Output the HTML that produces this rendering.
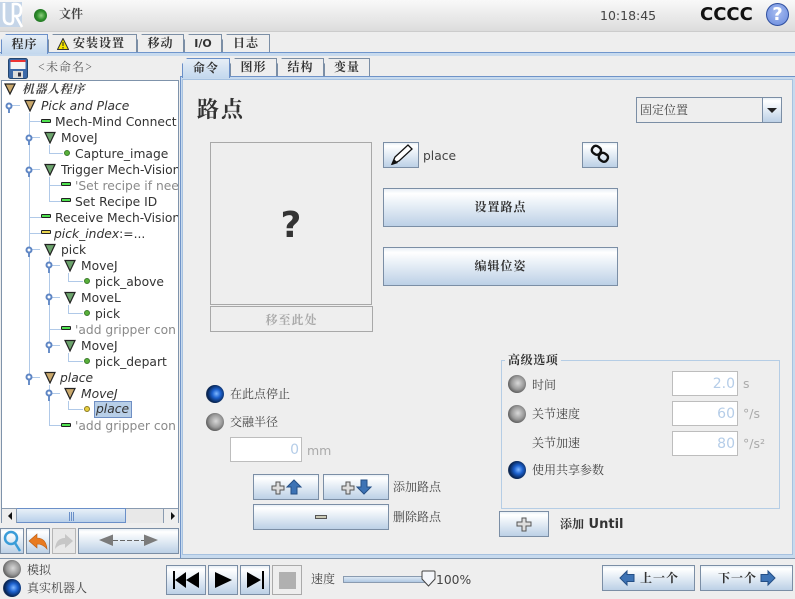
<!DOCTYPE html>
<html lang="zh"><head><meta charset="utf-8"><title>Waypoint</title>
<style>
html,body{margin:0;padding:0}
body{width:795px;height:599px;overflow:hidden;background:#eee;position:relative;font-family:"DejaVu Sans","Noto Serif CJK SC",sans-serif;color:#333}
div,span,svg{position:absolute;box-sizing:border-box}
.c{font-family:"Noto Serif CJK SC","WenQuanYi Zen Hei",serif;white-space:nowrap;color:#444;font-size:12px}
.t{font-size:12.3px;white-space:nowrap;line-height:16px;color:#333;margin-top:1px}
.i{font-style:italic}.g{color:#8a8a8a}
.btn{border:1px solid #7b8ea5;background:linear-gradient(#e8eff6 0,#fff 12%,#e6eef6 45%,#bcd0e6 100%);text-align:center}
.tab{border:1px solid #7b8ea5;border-bottom:0;background:#eee;font-weight:bold;font-size:12px;letter-spacing:1px;text-align:center;font-family:"Noto Serif CJK SC",serif;color:#333;clip-path:polygon(5px 0,100% 0,100% 100%,0 100%,0 6px)}
.tab.on{background:linear-gradient(#e6eef6,#c3d8ee);border-color:#6a8fc8;top:auto}
.l{background:#b0c9e8}
.bar{width:10px;height:4px;border:1px solid #222;background:#4fe04f;border-radius:1px}
.yb{background:#e8d44f}
.dot{width:6px;height:6px;border-radius:50%;background:#58b03a;border:1px solid #3a7a2a}
.fld{background:#fff;border:1px solid #bdbdbd;text-align:right;font-size:14px;line-height:24px;padding-right:2px;color:#b5cde8;height:25px}
.rg{width:18px;height:18px;border-radius:50%;background:radial-gradient(circle at 55% 45%,#d8d8d8 0,#9a9a9a 45%,#555 75%,#bbb 100%)}
.rb{width:18px;height:18px;border-radius:50%;background:radial-gradient(circle at 58% 48%,#7fb7ff 0,#1d62cf 30%,#06224f 65%,#999 100%)}
.u{font-size:12.5px;color:#aaa;white-space:nowrap;margin-top:2px}
</style></head><body>

<!-- top bar -->
<div style="left:0;top:0;width:795px;height:32px;background:linear-gradient(#f9f9f9,#dcdcdc);border-bottom:1px solid #ccc"></div>
<div style="left:0;top:2px;width:22px;height:25px;background:#c5d5e8"></div>
<svg style="left:0;top:2px" width="24" height="26" viewBox="0 0 24 26"><path d="M4 1V16Q4 22 10 22Q13 22 13 18V1M13 14H17Q21 14 21 8Q21 2 16 2H13M16 14L22 25" fill="none" stroke="#fff" stroke-width="2.6"/></svg>
<div style="left:34px;top:9px;width:13px;height:13px;border-radius:50%;background:radial-gradient(circle at 55% 50%,#8fd080 0,#2f8f2c 45%,#0f5518 100%)"></div>
<div class="c" style="left:59px;top:6px;font-weight:bold;line-height:16px">文件</div>
<div class="t" style="left:600px;top:7px;color:#444;font-size:12.5px">10:18:45</div>
<div style="left:700px;top:4px;font-size:18px;font-weight:bold;color:#111;line-height:22px;white-space:nowrap">CCCC</div>
<div style="left:766px;top:3px;width:23px;height:23px;border-radius:50%;background:radial-gradient(circle at 50% 40%,#a8bdf0,#6688dd);border:1px solid #2f4f9f;color:#fff;font-weight:bold;font-size:18px;line-height:21px;text-align:center">?</div>

<!-- main tabs -->
<div style="left:0;top:52px;width:795px;height:1px;background:#7096cc"></div>
<div style="left:0;top:53px;width:795px;height:3px;background:#c7daee"></div>
<div class="tab on" style="left:1px;top:34px;width:47px;height:20px;line-height:17px">程序</div>
<div class="tab" style="left:48px;top:34px;width:89px;height:18px;line-height:16px;text-align:right;padding-right:11px">安装设置</div>
<svg style="left:57px;top:38px" width="12" height="12"><path d="M6 .5L11.5 11.5H.5Z" fill="#f6e600" stroke="#333"/><path d="M6 4V8M6 9V10.5" stroke="#222"/></svg>
<div class="tab" style="left:137px;top:34px;width:47px;height:18px;line-height:16px">移动</div>
<div class="tab" style="left:184px;top:34px;width:38px;height:18px;line-height:17px;font-family:'DejaVu Sans';font-size:11px;letter-spacing:0">I/O</div>
<div class="tab" style="left:222px;top:34px;width:48px;height:18px;line-height:16px">日志</div>

<!-- save row -->
<svg style="left:8px;top:58px" width="20" height="21" viewBox="0 0 20 21"><rect x=".5" y=".5" width="19" height="20" rx="2" fill="#3c69a8" stroke="#24466f"/><rect x="2.5" y="2" width="15" height="9" fill="#f4f4f4"/><rect x="2.5" y="2" width="15" height="2" fill="#e33"/><rect x="5" y="13" width="10" height="7" fill="#ddd"/><rect x="10" y="14.500" width="3" height="4" fill="#334"/></svg>
<div class="c" style="left:38px;top:59px;line-height:16px;color:#555;letter-spacing:1px">&lt;未命名&gt;</div>

<!-- tree -->
<div style="left:1px;top:80px;width:178px;height:443px;background:#fff;border:1px solid #7f93ab"></div>
<div style="left:0;top:80px;width:178px;height:428px;overflow:hidden" id="tree">
<!-- connectors -->
<div class="l" style="left:9px;top:25px;width:11px;height:1px"></div>
<div class="l" style="left:29px;top:33px;width:1px;height:264px"></div>
<div class="l" style="left:29px;top:41px;width:12px;height:1px"></div>
<div class="l" style="left:29px;top:137px;width:12px;height:1px"></div>
<div class="l" style="left:29px;top:153px;width:12px;height:1px"></div>
<div class="l" style="left:29px;top:57px;width:11px;height:1px"></div>
<div class="l" style="left:29px;top:89px;width:11px;height:1px"></div>
<div class="l" style="left:29px;top:169px;width:11px;height:1px"></div>
<div class="l" style="left:29px;top:297px;width:11px;height:1px"></div>
<div class="l" style="left:49px;top:65px;width:1px;height:8px"></div>
<div class="l" style="left:49px;top:73px;width:14px;height:1px"></div>
<div class="l" style="left:49px;top:97px;width:1px;height:25px"></div>
<div class="l" style="left:49px;top:105px;width:12px;height:1px"></div>
<div class="l" style="left:49px;top:121px;width:12px;height:1px"></div>
<div class="l" style="left:49px;top:177px;width:1px;height:88px"></div>
<div class="l" style="left:49px;top:185px;width:11px;height:1px"></div>
<div class="l" style="left:49px;top:217px;width:11px;height:1px"></div>
<div class="l" style="left:49px;top:249px;width:12px;height:1px"></div>
<div class="l" style="left:49px;top:265px;width:11px;height:1px"></div>
<div class="l" style="left:49px;top:305px;width:1px;height:41px"></div>
<div class="l" style="left:49px;top:313px;width:11px;height:1px"></div>
<div class="l" style="left:49px;top:345px;width:12px;height:1px"></div>
<div class="l" style="left:68px;top:193px;width:1px;height:9px"></div><div class="l" style="left:68px;top:201px;width:15px;height:1px"></div>
<div class="l" style="left:68px;top:225px;width:1px;height:9px"></div><div class="l" style="left:68px;top:233px;width:15px;height:1px"></div>
<div class="l" style="left:68px;top:273px;width:1px;height:9px"></div><div class="l" style="left:68px;top:281px;width:15px;height:1px"></div>
<div class="l" style="left:68px;top:321px;width:1px;height:9px"></div><div class="l" style="left:68px;top:329px;width:15px;height:1px"></div>

<!-- handles -->
<svg style="left:0;top:0" width="180" height="428">
<g fill="#6a8fc8">
<rect x="8" y="28" width="2" height="5"/><rect x="28" y="60" width="2" height="5"/><rect x="28" y="92" width="2" height="5"/><rect x="28" y="172" width="2" height="5"/><rect x="28" y="300" width="2" height="5"/><rect x="48" y="188" width="2" height="5"/><rect x="48" y="220" width="2" height="5"/><rect x="48" y="268" width="2" height="5"/><rect x="48" y="316" width="2" height="5"/></g>
<g fill="#fff" stroke="#5f86c4" stroke-width="2">
<circle cx="9" cy="26" r="2.500"/><circle cx="29" cy="58" r="2.500"/><circle cx="29" cy="90" r="2.500"/><circle cx="29" cy="170" r="2.500"/><circle cx="29" cy="297" r="2.500"/><circle cx="49" cy="185" r="2.500"/><circle cx="49" cy="217" r="2.500"/><circle cx="49" cy="265" r="2.500"/><circle cx="49" cy="313" r="2.500"/></g>
<g stroke-width="1.2" stroke="#222">
<path d="M5 4H15L10 14Z" fill="#c9a86c"/><path d="M25 20.500H35L30 31Z" fill="#c9a86c"/>
<path d="M45 52.500H55L50 63Z" fill="#6da46d"/><path d="M45 84.500H55L50 95Z" fill="#6da46d"/><path d="M45 164.500H55L50 175Z" fill="#6da46d"/>
<path d="M65 180.500H75L70 191Z" fill="#6da46d"/><path d="M65 212.500H75L70 223Z" fill="#6da46d"/><path d="M65 260.500H75L70 271Z" fill="#6da46d"/>
<path d="M45 292.500H55L50 303Z" fill="#c9a86c"/><path d="M65 308.500H75L70 319Z" fill="#c9a86c"/>
</g></svg>

<div class="bar" style="left:41px;top:39px"></div>
<div class="dot" style="left:64px;top:70px"></div>
<div class="bar" style="left:61px;top:102px"></div>
<div class="bar" style="left:61px;top:118px"></div>
<div class="bar" style="left:41px;top:134px"></div>
<div class="bar yb" style="left:41px;top:150px"></div>
<div class="dot" style="left:84px;top:198px"></div>
<div class="dot" style="left:84px;top:230px"></div>
<div class="bar" style="left:61px;top:246px"></div>
<div class="dot" style="left:84px;top:278px"></div>
<div class="dot" style="left:84px;top:326px;background:#e8cf3f;border-color:#8a7a22"></div>
<div class="bar" style="left:61px;top:343px"></div>

<div class="c i" style="left:22px;top:1px;line-height:16px;font-weight:bold;letter-spacing:.6px">机器人程序</div>
<div class="t i" style="left:41px;top:17px">Pick and Place</div>
<div class="t" style="left:55px;top:33px">Mech-Mind Connect</div>
<div class="t" style="left:61px;top:49px">MoveJ</div>
<div class="t" style="left:75px;top:65px">Capture_image</div>
<div class="t" style="left:61px;top:81px;width:117px;overflow:hidden">Trigger Mech-Vision</div>
<div class="t g" style="left:75px;top:97px;width:103px;overflow:hidden">'Set recipe if need</div>
<div class="t" style="left:75px;top:113px">Set Recipe ID</div>
<div class="t" style="left:55px;top:129px;width:123px;overflow:hidden">Receive Mech-Vision</div>
<div class="t" style="left:54px;top:145px"><i>pick_index</i>:=...</div>
<div class="t" style="left:61px;top:161px">pick</div>
<div class="t" style="left:81px;top:177px">MoveJ</div>
<div class="t" style="left:95px;top:193px">pick_above</div>
<div class="t" style="left:81px;top:209px">MoveL</div>
<div class="t" style="left:95px;top:225px">pick</div>
<div class="t g" style="left:75px;top:241px;width:103px;overflow:hidden">'add gripper con</div>
<div class="t" style="left:81px;top:257px">MoveJ</div>
<div class="t" style="left:95px;top:273px">pick_depart</div>
<div class="t i" style="left:60px;top:289px">place</div>
<div class="t i" style="left:81px;top:305px">MoveJ</div>
<div class="t i" style="left:94px;top:321px;width:38px;height:17px;margin-top:0;background:#b8cfe8;border:1px solid #6f8fc4;padding-left:1px;line-height:15px">place</div>
<div class="t g" style="left:75px;top:337px;width:103px;overflow:hidden">'add gripper con</div>
</div>

<!-- horizontal scrollbar -->
<div style="left:2px;top:508px;width:176px;height:15px;background:#e8e8e8;border-top:1px solid #8a9bb0"></div>
<div style="left:16px;top:508px;width:110px;height:15px;border:1px solid #6a8fc8;background:linear-gradient(#e8f0f8,#b9d0ea)"></div>
<div style="left:69px;top:512px;width:5px;height:9px;border-left:1px solid #6a8fc8;border-right:1px solid #6a8fc8"></div>
<div style="left:71px;top:512px;width:1px;height:9px;background:#6a8fc8"></div>
<div style="left:2px;top:508px;width:15px;height:15px;background:#eee;border-right:1px solid #8a9bb0;border-top:1px solid #8a9bb0"></div>
<div style="left:163px;top:508px;width:15px;height:15px;background:#eee;border-left:1px solid #8a9bb0;border-top:1px solid #8a9bb0"></div>
<svg style="left:2px;top:508px" width="176" height="15"><path d="M10 4V12L6 8Z" fill="#111"/><path d="M169 4V12L173 8Z" fill="#111"/></svg>

<!-- toolbar -->
<div class="btn" style="left:0;top:528px;width:24px;height:26px"></div>
<svg style="left:0;top:528px" width="24" height="26"><circle cx="11" cy="10" r="6" fill="none" stroke="#3a9cd8" stroke-width="2.500"/><path d="M15 15L20 23" stroke="#3a9cd8" stroke-width="2.500"/></svg>
<div class="btn" style="left:26px;top:528px;width:24px;height:26px"></div>
<svg style="left:26px;top:528px" width="24" height="26"><path d="M3 13L11 6V10Q20 10 21 21Q17 16 11 16V20Z" fill="#e87a20" stroke="#b85a10" stroke-width=".6"/></svg>
<div style="left:52px;top:528px;width:24px;height:26px;border:1px solid #b5b5b5;background:#e8e8e8"></div>
<svg style="left:52px;top:528px" width="24" height="26"><path d="M21 13L13 6V10Q4 10 3 21Q7 16 13 16V20Z" fill="#c6c6c6"/></svg>
<div class="btn" style="left:78px;top:528px;width:101px;height:26px"></div>
<svg style="left:78px;top:528px" width="101" height="26"><path d="M21 12L35 6.500V18Z M80 12L66 6.500V18Z" fill="#7b7b7b"/><path d="M35 12.500H66" stroke="#666" stroke-dasharray="5 2"/></svg>

<!-- right panel -->
<div style="left:180px;top:76px;width:615px;height:482px;border-top:1px solid #6f93c8;border-left:1px solid #6f93c8;background:#c7daee"></div>
<div style="left:182px;top:79px;width:611px;height:476px;background:#eee;border:1px solid #a7c2e0"></div>
<div class="tab on" style="left:182px;top:58px;width:48px;height:20px;line-height:17px">命令</div>
<div class="tab" style="left:230px;top:58px;width:47px;height:18px;line-height:16px">图形</div>
<div class="tab" style="left:277px;top:58px;width:47px;height:18px;line-height:16px">结构</div>
<div class="tab" style="left:324px;top:58px;width:46px;height:18px;line-height:16px">变量</div>

<div class="c" style="left:197px;top:95px;font-size:22px;letter-spacing:2px;font-weight:bold;line-height:28px;color:#333">路点</div>

<!-- dropdown -->
<div style="left:636px;top:97px;width:146px;height:26px;border:1px solid #7b8ea5;background:#eee"></div>
<div class="btn" style="left:762px;top:97px;width:20px;height:26px"></div>
<svg style="left:762px;top:97px" width="20" height="26"><path d="M5 11H15L10 16Z" fill="#222"/></svg>
<div class="c" style="left:640px;top:102px;line-height:16px">固定位置</div>

<!-- preview -->
<div style="left:210px;top:142px;width:162px;height:163px;border:1px solid #a8a8a8"></div>
<div style="left:210px;top:206px;width:162px;text-align:center;font-size:36px;font-weight:bold;color:#333;line-height:40px">?</div>
<div class="c" style="left:210px;top:306px;width:163px;height:26px;border:1px solid #a8a8a8;text-align:center;line-height:25px;color:#aaa;font-weight:bold;letter-spacing:1px">移至此处</div>

<!-- pencil row -->
<div class="btn" style="left:383px;top:142px;width:36px;height:26px"></div>
<svg style="left:383px;top:142px" width="36" height="26"><path d="M9 22L12 15L25 3L29 7L16 19Z" fill="#fff" stroke="#111" stroke-width="1.300"/><path d="M9 23L11 17L15 21Z" fill="#111"/></svg>
<div class="t" style="left:423px;top:147px;color:#444">place</div>
<div class="btn" style="left:582px;top:142px;width:36px;height:26px"></div>
<svg style="left:582px;top:142px" width="36" height="26"><g fill="none" stroke="#111" stroke-width="2.400"><rect x="10" y="4" width="9" height="8" rx="3.500" transform="rotate(35 14 8)"/><rect x="17" y="11" width="9" height="8" rx="3.500" transform="rotate(35 21 15)"/></g></svg>

<div class="btn c" style="left:383px;top:188px;width:235px;height:39px;line-height:36px;font-weight:bold;color:#333;letter-spacing:1px">设置路点</div>
<div class="btn c" style="left:383px;top:247px;width:235px;height:39px;line-height:36px;font-weight:bold;color:#333;letter-spacing:1px">编辑位姿</div>

<!-- stop radios -->
<div class="rb" style="left:206px;top:385px"></div>
<div class="c" style="left:230px;top:386px;line-height:16px">在此点停止</div>
<div class="rg" style="left:206px;top:413px"></div>
<div class="c" style="left:230px;top:414px;line-height:16px">交融半径</div>
<div class="fld" style="left:230px;top:437px;width:72px">0</div>
<div class="u" style="left:307px;top:441px">mm</div>

<!-- add/remove waypoint -->
<div class="btn" style="left:253px;top:474px;width:66px;height:26px"></div>
<svg style="left:253px;top:474px" width="66" height="26"><path d="M23 8H27V12H31V16H27V20H23V16H19V12H23Z" fill="#ddd" stroke="#555"/><path d="M38 20V13H34L41 6L48 13H44V20Z" fill="#3d73b5" stroke="#244f86"/></svg>
<div class="btn" style="left:323px;top:474px;width:66px;height:26px"></div>
<svg style="left:323px;top:474px" width="66" height="26"><path d="M23 8H27V12H31V16H27V20H23V16H19V12H23Z" fill="#ddd" stroke="#555"/><path d="M38 6V13H34L41 20L48 13H44V6Z" fill="#3d73b5" stroke="#244f86"/></svg>
<div class="c" style="left:393px;top:479px;line-height:16px">添加路点</div>
<div class="btn" style="left:253px;top:504px;width:136px;height:26px"></div>
<div style="left:315px;top:515px;width:12px;height:4px;background:#c9c9b5;border:1px solid #555"></div>
<div class="c" style="left:393px;top:509px;line-height:16px">删除路点</div>

<!-- advanced -->
<div style="left:501px;top:360px;width:279px;height:149px;border:1px solid #b5cde5"></div>
<div class="c" style="left:505px;top:352px;background:#eee;padding:0 3px;font-weight:bold;line-height:16px;color:#333;letter-spacing:.6px">高级选项</div>
<div class="rg" style="left:508px;top:375px"></div>
<div class="c" style="left:532px;top:377px;line-height:16px">时间</div>
<div class="fld" style="left:672px;top:371px;width:66px">2.0</div><div class="u" style="left:743px;top:374px">s</div>
<div class="rg" style="left:508px;top:405px"></div>
<div class="c" style="left:532px;top:406px;line-height:16px">关节速度</div>
<div class="fld" style="left:672px;top:401px;width:66px">60</div><div class="u" style="left:743px;top:404px">°/s</div>
<div class="c" style="left:532px;top:435px;line-height:16px">关节加速</div>
<div class="fld" style="left:672px;top:431px;width:66px">80</div><div class="u" style="left:743px;top:434px">°/s²</div>
<div class="rb" style="left:508px;top:461px"></div>
<div class="c" style="left:532px;top:462px;line-height:16px">使用共享参数</div>

<div class="btn" style="left:499px;top:511px;width:50px;height:26px"></div>
<svg style="left:499px;top:511px" width="50" height="26"><path d="M23 7H27V11H32V15H27V20H23V15H18V11H23Z" fill="#ddd" stroke="#555"/></svg>
<div style="left:560px;top:516px;font-size:13px;font-weight:bold;line-height:16px;color:#333;white-space:nowrap"><span class="c" style="position:static;color:#333">添加</span> Until</div>

<!-- bottom -->
<div style="left:0;top:558px;width:795px;height:1px;background:#8095ad"></div>
<div class="rg" style="left:3px;top:560px"></div>
<div class="c" style="left:27px;top:562px;line-height:16px">模拟</div>
<div class="rb" style="left:3px;top:579px"></div>
<div class="c" style="left:27px;top:580px;line-height:16px">真实机器人</div>

<div class="btn" style="left:166px;top:565px;width:40px;height:30px"></div>
<svg style="left:166px;top:565px" width="40" height="30"><path d="M7 6H9V24H7ZM9 15L20 7V23ZM20 15L33 7V23Z" fill="#000"/></svg>
<div class="btn" style="left:208px;top:565px;width:30px;height:30px"></div>
<svg style="left:208px;top:565px" width="30" height="30"><path d="M7 7L24 15L7 23Z" fill="#000"/></svg>
<div class="btn" style="left:240px;top:565px;width:30px;height:30px"></div>
<svg style="left:240px;top:565px" width="30" height="30"><path d="M7 7L21 15L7 23ZM22 6H24V24H22Z" fill="#000"/></svg>
<div style="left:272px;top:565px;width:30px;height:30px;border:1px solid #aaa;background:#eee"></div>
<div style="left:279px;top:572px;width:17px;height:17px;background:#b0b0b0"></div>

<div class="c" style="left:311px;top:571px;line-height:16px">速度</div>
<div style="left:343px;top:576px;width:85px;height:7px;border:1px solid #8a9bb0;background:linear-gradient(#dce8f4,#b0c8e2)"></div>
<svg style="left:420px;top:570px" width="18" height="18"><path d="M2 2Q2 1 3 1H14Q15 1 15 2V9L8.500 16L2 9Z" fill="#f4f6fa" stroke="#444"/></svg>
<div class="t" style="left:436px;top:571px;color:#444">100%</div>

<div class="btn" style="left:602px;top:565px;width:93px;height:26px"></div>
<svg style="left:602px;top:565px" width="93" height="26"><path d="M18 13L25 6V9.500H32V16.500H25V20Z" fill="#3d73b5" stroke="#244f86"/></svg>
<div class="c" style="left:640px;top:570px;font-weight:bold;line-height:16px;color:#333;letter-spacing:1px">上一个</div>
<div class="btn" style="left:700px;top:565px;width:93px;height:26px"></div>
<svg style="left:700px;top:565px" width="93" height="26"><path d="M75 13L68 6V9.500H61V16.500H68V20Z" fill="#3d73b5" stroke="#244f86"/></svg>
<div class="c" style="left:718px;top:570px;font-weight:bold;line-height:16px;color:#333;letter-spacing:1px">下一个</div>

</body></html>
